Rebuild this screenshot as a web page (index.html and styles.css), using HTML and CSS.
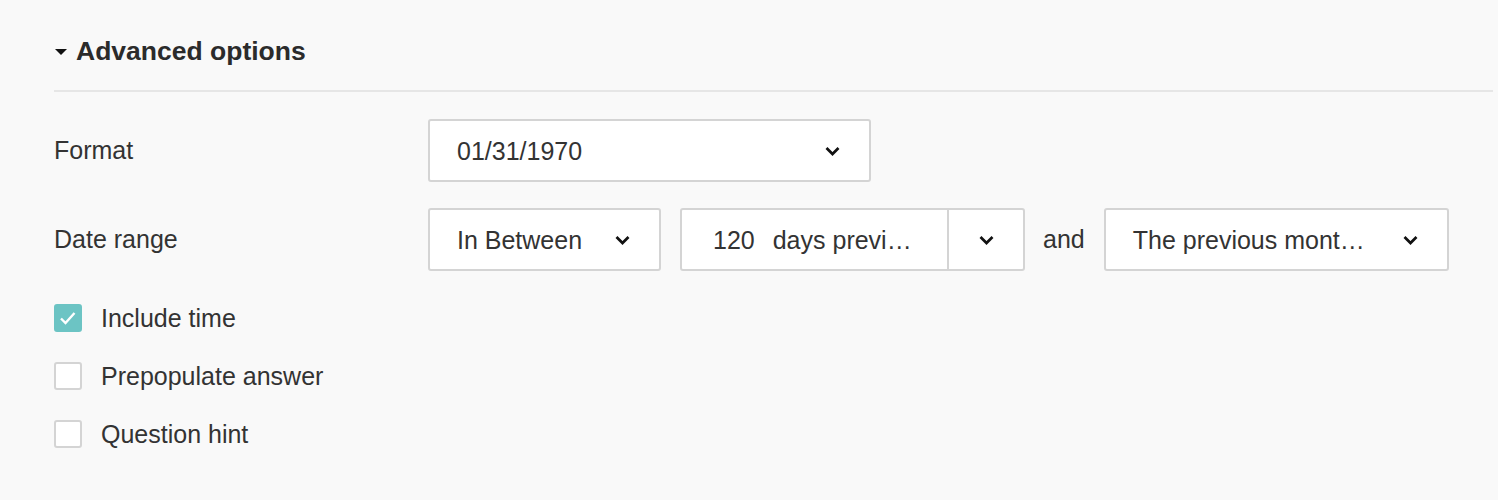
FILE: index.html
```html
<!DOCTYPE html>
<html>
<head>
<meta charset="utf-8">
<link rel="stylesheet" href="styles.css">
</head>
<body>
<div class="panel">
  <div class="header">
    <span class="caret"></span>
    <span class="title">Advanced options</span>
  </div>
  <div class="rows">
    <div class="row">
      <div class="label">Format</div>
      <div class="select w-format"><span class="val">01/31/1970</span><svg class="chev" viewBox="0 0 15 10"><path d="M1.5 2 L7.5 8 L13.5 2" /></svg></div>
    </div>
    <div class="row">
      <div class="label">Date range</div>
      <div class="controls">
        <div class="select w-between"><span class="val">In Between</span><svg class="chev" viewBox="0 0 15 10"><path d="M1.5 2 L7.5 8 L13.5 2" /></svg></div>
        <div class="combo">
          <div class="combo-main"><span class="num">120</span><span class="val">days previ…</span></div>
          <div class="combo-btn"><svg class="chev" viewBox="0 0 15 10"><path d="M1.5 2 L7.5 8 L13.5 2" /></svg></div>
        </div>
        <span class="and">and</span>
        <div class="select w-month"><span class="val">The previous mont…</span><svg class="chev" viewBox="0 0 15 10"><path d="M1.5 2 L7.5 8 L13.5 2" /></svg></div>
      </div>
    </div>
  </div>
  <div class="checks">
    <div class="check"><span class="box checked"><svg viewBox="0 0 28 28"><path d="M7 14.5 L11.5 19 L20.5 9" /></svg></span><span>Include time</span></div>
    <div class="check"><span class="box"></span><span>Prepopulate answer</span></div>
    <div class="check"><span class="box"></span><span>Question hint</span></div>
  </div>
</div>
</body>
</html>
```
FILE: styles.css
```css
* { box-sizing: border-box; }
html, body { margin: 0; background: #f9f9f9; }
body {
  font-family: "Liberation Sans", Arial, sans-serif;
  color: #333;
  font-size: 25px;
}
.panel { padding: 0 5px 0 54px; }
.header {
  display: flex;
  align-items: center;
  padding-top: 32px;
  padding-bottom: 20px;
  height: 92px;
  border-bottom: 2px solid #e6e6e6;
}
.caret {
  width: 0; height: 0;
  margin-left: 1px;
  border-left: 6px solid transparent;
  border-right: 6px solid transparent;
  border-top: 6px solid #111;
  margin-right: 9px;
  margin-top: 1px;
}
.title {
  font-weight: bold;
  font-size: 26.5px;
  line-height: 38px;
  color: #2b2b2b;
}
.rows {
  display: flex;
  flex-direction: column;
  gap: 26px;
  margin-top: 27px;
}
.row { display: flex; align-items: center; }
.label { width: 374px; }
.controls { display: flex; align-items: center; }
.select, .combo {
  height: 63px;
  background: #fff;
  border: 2px solid #d4d4d4;
  border-radius: 3px;
  display: flex;
  align-items: center;
}
.val, .num { padding-top: 2px; }
.select { padding: 0 29px 0 27px; justify-content: space-between; }
.w-format { width: 443px; }
.w-between { width: 233px; }
.w-month { width: 345px; }
.combo { width: 345px; margin-left: 19px; }
.combo-main {
  flex: 1;
  height: 100%;
  display: flex;
  align-items: center;
  padding-left: 31px;
  border-right: 2px solid #d4d4d4;
}
.num { margin-right: 18px; }
.combo-btn {
  width: 74px;
  display: flex;
  justify-content: center;
  align-items: center;
}
.and { margin: 0 19px 0 18px; }
.chev { width: 15px; height: 10px; flex: none; }
.chev path { fill: none; stroke: #111; stroke-width: 2.7; }
.checks {
  display: flex;
  flex-direction: column;
  gap: 30px;
  margin-top: 33px;
}
.check { display: flex; align-items: center; height: 28px; }
.box {
  width: 28px; height: 28px;
  border: 2px solid #d4d4d4;
  border-radius: 3px;
  background: #fff;
  margin-right: 19px;
  display: flex;
}
.box.checked { background: #6cc4c4; border-color: #6cc4c4; }
.box svg { margin: -2px; width: 28px; height: 28px; flex: none; }
.box svg path { fill: none; stroke: #fff; stroke-width: 2.4; }
```
